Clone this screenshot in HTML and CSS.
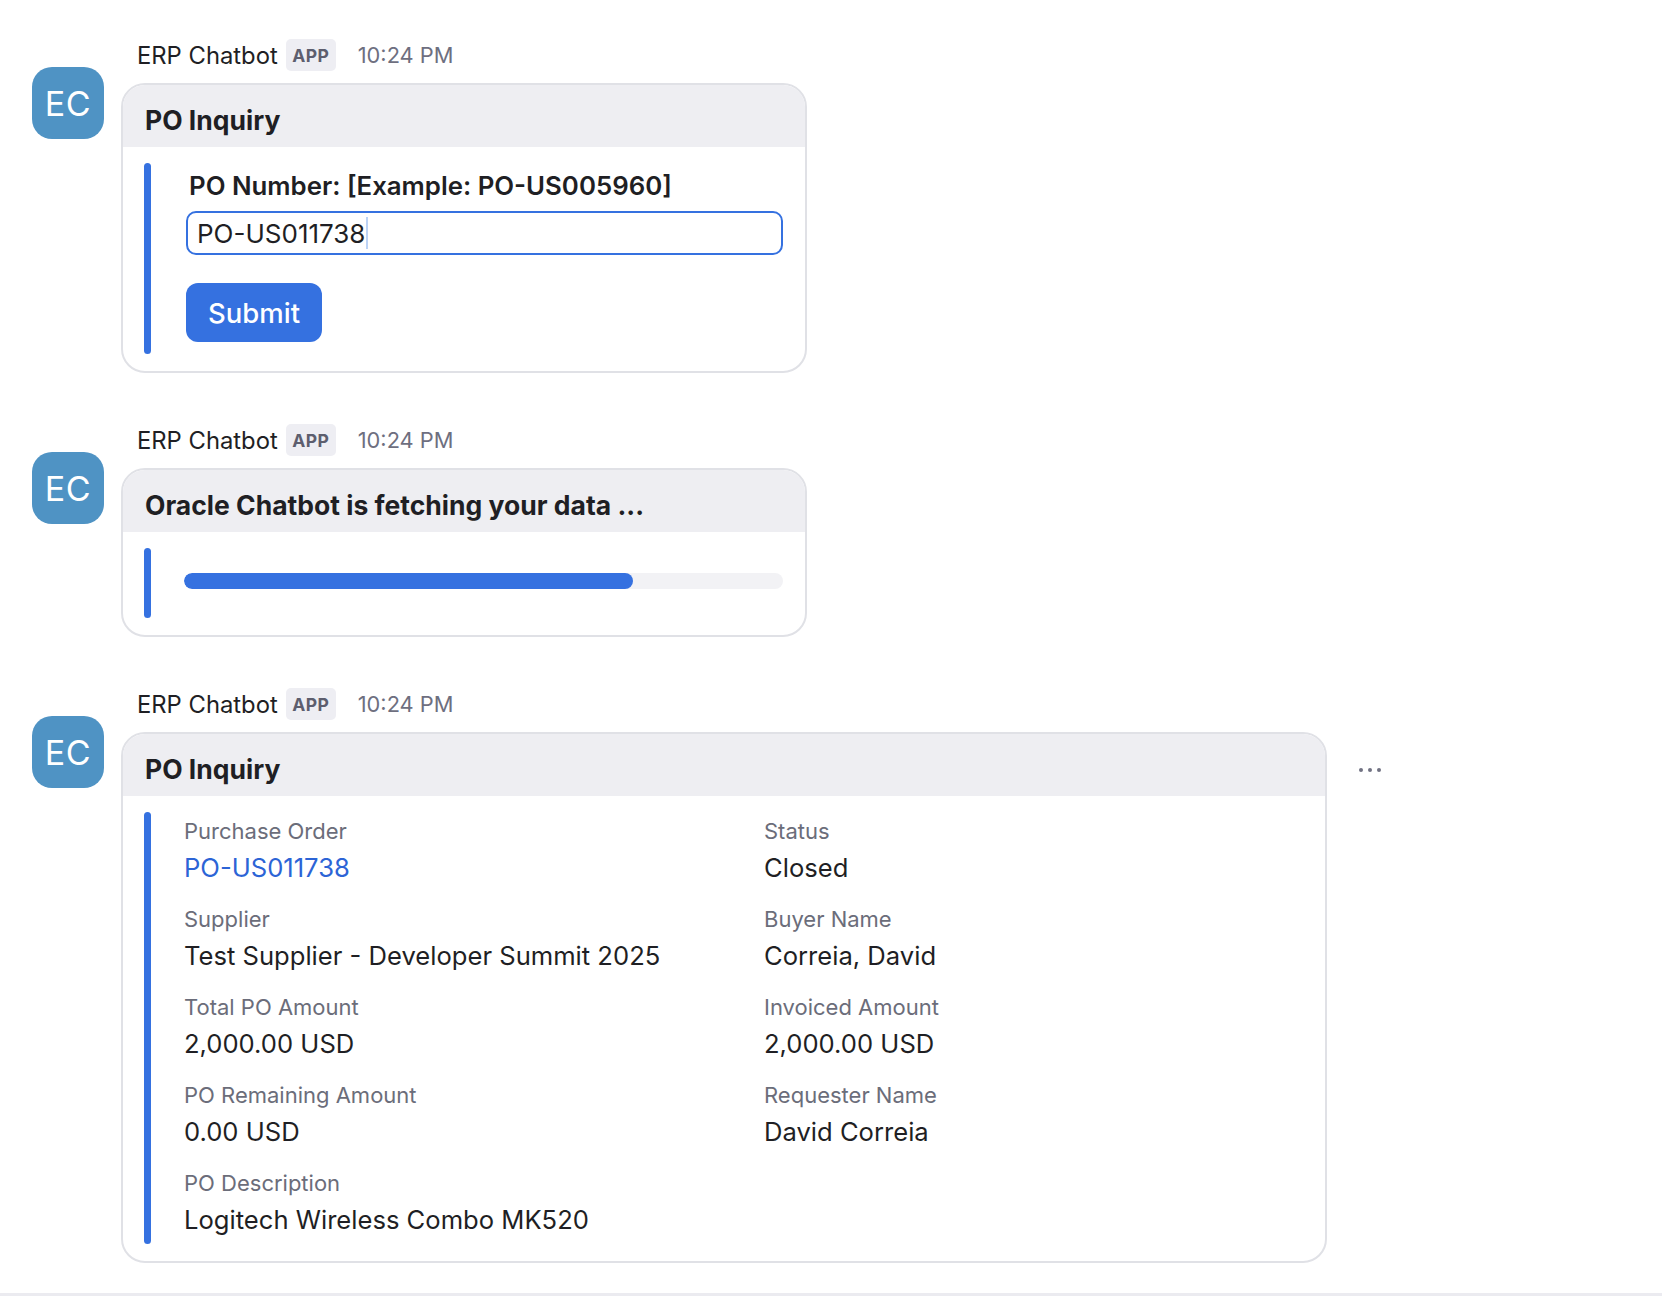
FILE: index.html
```html
<!DOCTYPE html>
<html lang="en">
<head>
<meta charset="utf-8">
<title>ERP Chatbot</title>
<link rel="stylesheet" href="styles.css">
</head>
<body>
<main class="feed">
  <section class="msg">
    <div class="avatar">EC</div>
    <div class="msg-main">
      <div class="msg-head"><span class="name">ERP Chatbot</span><span class="badge">APP</span><span class="time">10:24 PM</span></div>
      <div class="msg-row">
        <div class="card card-narrow">
          <div class="card-head">PO Inquiry</div>
          <div class="card-body">
            <div class="accent"></div>
            <div class="form">
              <div class="form-label">PO Number: [Example: PO-US005960]</div>
              <div class="input"><span class="input-text">PO-US011738</span><span class="caret"></span></div>
              <div class="btn">Submit</div>
            </div>
          </div>
        </div>
      </div>
    </div>
  </section>

  <section class="msg">
    <div class="avatar">EC</div>
    <div class="msg-main">
      <div class="msg-head"><span class="name">ERP Chatbot</span><span class="badge">APP</span><span class="time">10:24 PM</span></div>
      <div class="msg-row">
        <div class="card card-narrow">
          <div class="card-head">Oracle Chatbot is fetching your data ...</div>
          <div class="card-body">
            <div class="accent"></div>
            <div class="progress-wrap">
              <div class="track"><div class="fill" style="width:75%"></div></div>
            </div>
          </div>
        </div>
      </div>
    </div>
  </section>

  <section class="msg">
    <div class="avatar">EC</div>
    <div class="msg-main">
      <div class="msg-head"><span class="name">ERP Chatbot</span><span class="badge">APP</span><span class="time">10:24 PM</span></div>
      <div class="msg-row">
        <div class="card card-wide">
          <div class="card-head">PO Inquiry</div>
          <div class="card-body">
            <div class="accent"></div>
            <div class="fields">
              <div class="field"><div class="f-label">Purchase Order</div><div class="f-value link">PO-US011738</div></div>
              <div class="field"><div class="f-label">Status</div><div class="f-value">Closed</div></div>
              <div class="field"><div class="f-label">Supplier</div><div class="f-value">Test Supplier - Developer Summit 2025</div></div>
              <div class="field"><div class="f-label">Buyer Name</div><div class="f-value">Correia, David</div></div>
              <div class="field"><div class="f-label">Total PO Amount</div><div class="f-value">2,000.00 USD</div></div>
              <div class="field"><div class="f-label">Invoiced Amount</div><div class="f-value">2,000.00 USD</div></div>
              <div class="field"><div class="f-label">PO Remaining Amount</div><div class="f-value">0.00 USD</div></div>
              <div class="field"><div class="f-label">Requester Name</div><div class="f-value">David Correia</div></div>
              <div class="field"><div class="f-label">PO Description</div><div class="f-value">Logitech Wireless Combo MK520</div></div>
            </div>
          </div>
        </div>
        <div class="more" aria-label="More actions">
          <svg width="24" height="6" viewBox="0 0 24 6"><circle cx="3" cy="3" r="2" fill="#717282"/><circle cx="12" cy="3" r="2" fill="#717282"/><circle cx="21" cy="3" r="2" fill="#717282"/></svg>
        </div>
      </div>
    </div>
  </section>
</main>
<div class="bottom-strip"></div>
</body>
</html>
```

FILE: styles.css
```css
* { box-sizing: border-box; }

html, body {
  margin: 0;
  padding: 0;
  background: #ffffff;
}

body {
  font-family: "Inter", "Noto Sans", "Liberation Sans", sans-serif;
  color: #1f1f24;
  height: 1296px;
  position: relative;
  overflow: hidden;
}

.feed {
  display: flex;
  flex-direction: column;
  gap: 51px;
  padding-top: 39px;
}

.msg {
  display: flex;
  align-items: flex-start;
  padding-left: 32px;
}

.avatar {
  width: 72px;
  height: 72px;
  margin-top: 28px;
  margin-right: 17px;
  border-radius: 20px;
  background: #4f93c4;
  color: #ffffff;
  font-size: 34px;
  font-weight: 400;
  display: flex;
  align-items: center;
  justify-content: center;
  letter-spacing: 0.5px;
  flex-shrink: 0;
}

.msg-main {
  display: flex;
  flex-direction: column;
  gap: 12px;
}

.msg-head {
  display: flex;
  align-items: center;
  height: 32px;
  padding-left: 16px;
}

.name {
  font-size: 23.8px;
  color: #1f1f24;
  margin-right: 8px;
}

.badge {
  height: 32px;
  width: 50px;
  border-radius: 5px;
  background: #eeeef3;
  color: #5d5e6e;
  font-size: 17.5px;
  font-weight: 700;
  letter-spacing: 0.4px;
  display: flex;
  align-items: center;
  justify-content: center;
  margin-right: 22px;
}

.time {
  font-size: 21.8px;
  color: #6e6f7f;
}

.msg-row {
  display: flex;
  align-items: flex-start;
}

.card {
  border: 2px solid #e0e1e6;
  border-radius: 24px;
  overflow: hidden;
  background: #ffffff;
}

.card-narrow { width: 686px; }
.card-wide { width: 1206px; }

.card-head {
  height: 62px;
  background: #eeeef2;
  padding-left: 22px;
  padding-top: 7px;
  display: flex;
  align-items: center;
  font-size: 26.5px;
  font-weight: 700;
  color: #1f1f24;
}

.card-body {
  display: flex;
  align-items: stretch;
  padding: 16px 22px 17px 21px;
}

.accent {
  width: 7px;
  border-radius: 4px;
  background: #3571e0;
  flex-shrink: 0;
}

/* form card */
.form {
  flex: 1;
  margin-left: 35px;
  padding: 7px 0 12px;
  display: flex;
  flex-direction: column;
  align-items: flex-start;
}

.form-label {
  font-size: 25.8px;
  line-height: 32px;
  font-weight: 600;
  color: #1f1f24;
  padding-left: 3px;
}

.input {
  margin-top: 9px;
  width: 100%;
  height: 44px;
  border: 2px solid #3571e0;
  border-radius: 10px;
  padding-left: 9px;
  display: flex;
  align-items: center;
  font-size: 26px;
  color: #1f1f24;
}

.caret {
  display: inline-block;
  width: 2px;
  height: 32px;
  background: #bcd3f6;
  margin-left: 1px;
}

.btn {
  margin-top: 28px;
  width: 136px;
  height: 59px;
  border-radius: 12px;
  background: #3571e0;
  color: #ffffff;
  font-size: 27.5px;
  font-weight: 500;
  display: flex;
  align-items: center;
  justify-content: center;
}

/* progress card */
.progress-wrap {
  flex: 1;
  margin-left: 33px;
  padding: 25px 0 29px;
}

.track {
  height: 16px;
  border-radius: 8px;
  background: #f2f2f5;
  overflow: hidden;
}

.fill {
  height: 100%;
  border-radius: 8px;
  background: #3571e0;
}

/* details card */
.fields {
  flex: 1;
  margin-left: 33px;
  padding: 5px 0 7px;
  display: grid;
  grid-template-columns: 580px 1fr;
  row-gap: 20px;
}

.f-label {
  font-size: 22px;
  line-height: 28px;
  color: #6b6d7a;
}

.f-value {
  margin-top: 6px;
  font-size: 25.6px;
  line-height: 34px;
  color: #1f1f24;
}

.f-value.link {
  color: #2c64d6;
}

.more {
  margin-left: 31px;
  margin-top: 35px;
  display: flex;
}

.bottom-strip {
  position: absolute;
  left: 0;
  right: 0;
  bottom: 0;
  height: 3px;
  background: #ebebf0;
}
```
